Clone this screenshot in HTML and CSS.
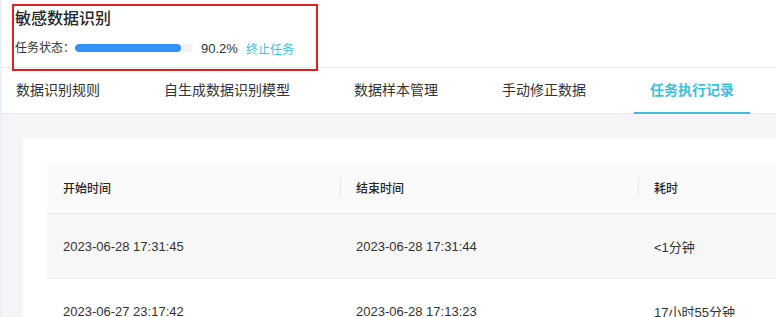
FILE: index.html
```html
<!DOCTYPE html>
<html lang="zh-CN">
<head>
    <meta charset="UTF-8">
    <meta name="viewport" content="width=device-width, initial-scale=1.0">
    <title>敏感数据识别</title>
    <link rel="stylesheet" href="styles.css">
</head>
<body>
    <div class="page">
        <!-- task header -->
        <header class="task-head">
            <h1 class="task-title">敏感数据识别</h1>
            <div class="task-status">
                <span class="status-label">任务状态：</span>
                <div class="progress"><div class="progress-fill" style="width: 90.2%"></div></div>
                <span class="progress-text">90.2%</span>
                <a class="stop-link" href="#">终止任务</a>
            </div>
            <div class="mark"></div>
        </header>

        <!-- tabs -->
        <nav class="tabs">
            <a class="tab" href="#">数据识别规则</a>
            <a class="tab" href="#">自生成数据识别模型</a>
            <a class="tab" href="#">数据样本管理</a>
            <a class="tab" href="#">手动修正数据</a>
            <a class="tab active" href="#">任务执行记录</a>
        </nav>

        <!-- records -->
        <main class="content">
            <div class="card">
                <table class="records">
                    <colgroup>
                        <col class="col-start">
                        <col class="col-end">
                        <col class="col-cost">
                    </colgroup>
                    <thead>
                        <tr>
                            <th>开始时间</th>
                            <th>结束时间</th>
                            <th>耗时</th>
                        </tr>
                    </thead>
                    <tbody>
                        <tr class="hover">
                            <td>2023-06-28 17:31:45</td>
                            <td>2023-06-28 17:31:44</td>
                            <td>&lt;1分钟</td>
                        </tr>
                        <tr>
                            <td>2023-06-27 23:17:42</td>
                            <td>2023-06-28 17:13:23</td>
                            <td>17小时55分钟</td>
                        </tr>
                    </tbody>
                </table>
            </div>
        </main>
    </div>
</body>
</html>
```

FILE: styles.css
```css
html, body {
    margin: 0;
    height: 100%;
    overflow: hidden;
}

body {
    font-family: "Liberation Sans", "Noto Sans CJK SC", sans-serif;
    color: #333;
    background: #fff;
}

body::before {
    content: "";
    position: fixed;
    left: 0;
    top: 0;
    bottom: 0;
    width: 2px;
    background: #edf1f7;
    z-index: 5;
}

.page {
    display: flex;
    flex-direction: column;
    height: 100%;
}

/* header */
.task-head {
    position: relative;
    height: 67px;
    padding-left: 15px;
    border-bottom: 1px solid #ebebeb;
    box-sizing: border-box;
    height: 68px;
}

.task-title {
    margin: 0;
    padding-top: 8px;
    font-size: 16px;
    line-height: 22px;
    font-weight: 500;
    color: #262626;
}

.task-status {
    display: flex;
    align-items: center;
    height: 20px;
    margin-top: 8px;
    font-size: 12px;
}

.status-label {
    line-height: 20px;
}

.progress {
    width: 118px;
    height: 8px;
    border-radius: 4px;
    background: #f2f2f2;
    overflow: hidden;
}

.progress-fill {
    height: 100%;
    border-radius: 4px;
    background: #3491fa;
}

.progress-text {
    margin-left: 8px;
    font-size: 13px;
    color: #333;
}

.stop-link {
    margin-left: 8px;
    color: #3cbfe0;
    text-decoration: none;
}

.mark {
    position: absolute;
    left: 12px;
    top: 4px;
    width: 306px;
    height: 67px;
    border: 2px solid #e02020;
    box-sizing: border-box;
}

/* tabs */
.tabs {
    display: flex;
    gap: 32px;
    height: 46px;
    border-bottom: 1px solid #e8e8e8;
    box-sizing: border-box;
}

.tab {
    padding: 0 16px;
    font-size: 14px;
    line-height: 45px;
    color: #333;
    text-decoration: none;
    border-bottom: 2px solid transparent;
    margin-bottom: -1px;
    box-sizing: border-box;
}

.tab.active {
    color: #3dbfdc;
    font-weight: 600;
    border-bottom-color: #3dbfdc;
}

/* content */
.content {
    flex: 1;
    background: #f5f5f5;
    padding: 24px 0 0 23px;
    overflow: hidden;
}

.card {
    width: 1000px;
    background: #fff;
    padding: 24px;
    min-height: 300px;
}

.records {
    width: 900px;
    border-collapse: collapse;
    table-layout: fixed;
}

.col-start { width: 293px; }
.col-end { width: 298px; }

.records th {
    position: relative;
    height: 51px;
    padding: 0 16px;
    text-align: left;
    font-size: 12px;
    font-weight: 500;
    color: #262626;
    background: #fafafa;
    border-bottom: 1px solid #ebebeb;
}

.records th + th::before {
    content: "";
    position: absolute;
    left: 0;
    top: 15px;
    width: 1px;
    height: 20px;
    background: #e6e6e6;
}

.records td {
    height: 64px;
    padding: 0 16px;
    font-size: 13px;
    color: #333;
    border-bottom: 1px solid #ebebeb;
}

.records tr.hover td {
    background: #f7f7f7;
}
```
